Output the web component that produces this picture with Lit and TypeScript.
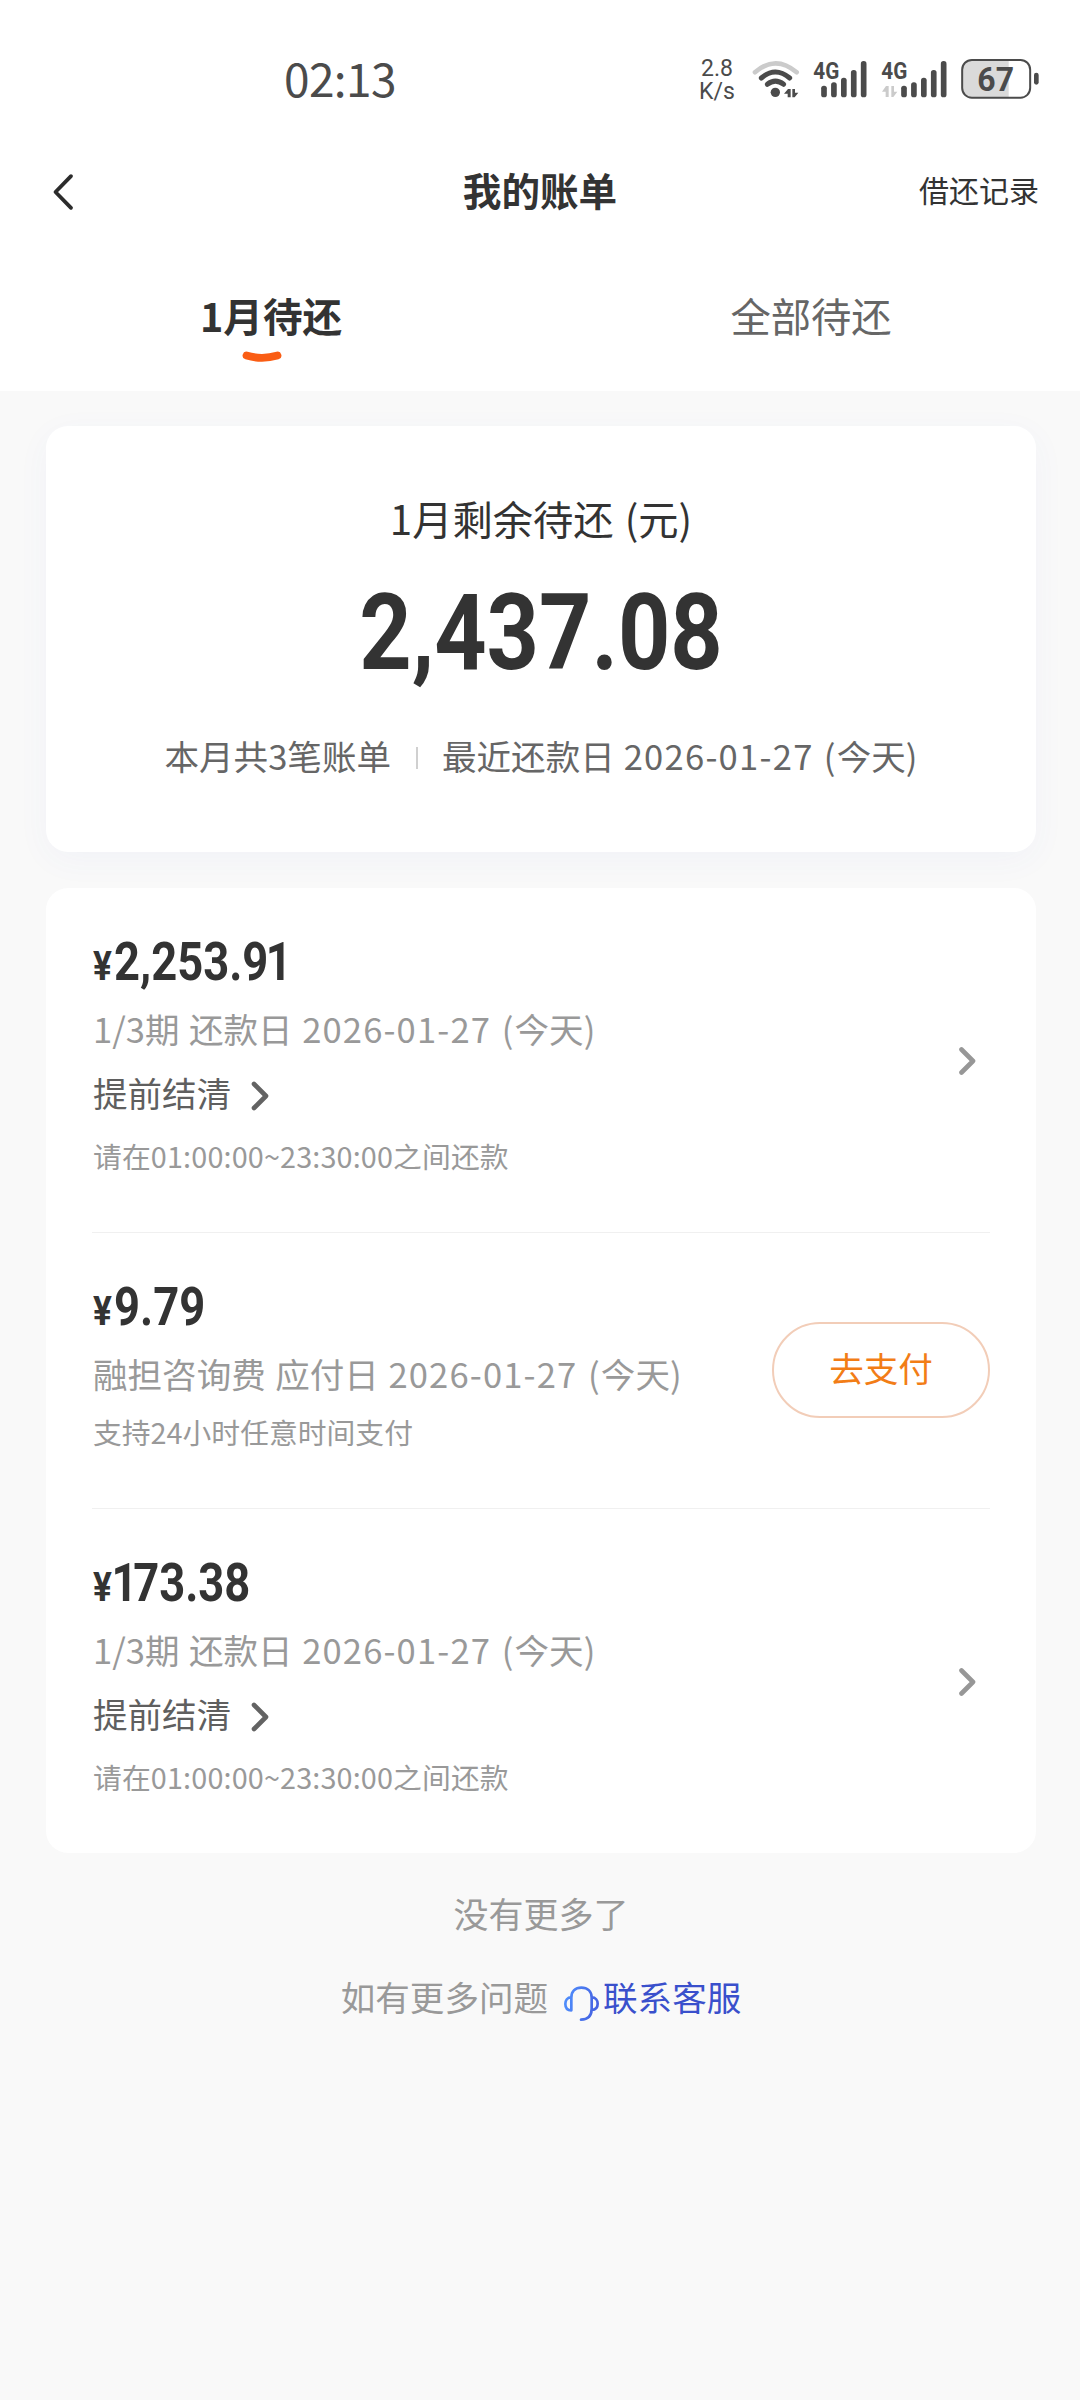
import { LitElement, html, css, svg, nothing } from "lit";
import { customElement, property } from "lit/decorators.js";

interface Bill {
  amount: string;
  label: string;
  date: string;
  note: string;
  payable: boolean;
}

const BILLS: Bill[] = [
  { amount: "2,253.91", label: "1/3期 还款日", date: "2026-01-27", note: "请在01:00:00~23:30:00之间还款", payable: false },
  { amount: "9.79", label: "融担咨询费 应付日", date: "2026-01-27", note: "支持24小时任意时间支付", payable: true },
  { amount: "173.38", label: "1/3期 还款日", date: "2026-01-27", note: "请在01:00:00~23:30:00之间还款", payable: false },
];

const bars = (x0: number) =>
  [137, 127, 113, 90, 63].map(
    (top, i) => svg`<rect x=${x0 + i * 29.75 - 8.5} y=${top} width="17" height=${172 - top} rx="8"></rect>`
  );

@customElement("status-bar")
class StatusBar extends LitElement {
  static styles = css`
    :host { display: block; }
    .bar { display: flex; height: 80px; padding: 40px 39px 0 284px; font-family: "Noto Sans CJK SC", sans-serif; color: #4b4b4b; }
    .time { font-size: 46px; line-height: 75px; letter-spacing: -0.6px; flex: 1; }
    .speed { font-family: Roboto, sans-serif; font-size: 23px; width: 48px; padding-top: 17px; text-align: center; margin-right: 9px; }
    .speed div { line-height: 23px; height: 23px; }
    svg { display: block; height: 80px; fill: #4b4b4b; flex: none; }
    .line { fill: none; stroke: #4b4b4b; stroke-width: 15; stroke-linecap: round; }
    .faint { stroke: #cbcbcb; stroke-width: 14; }
    .pale { fill: #cbcbcb; }
    .charge { fill: #dadada; }
    .case { fill: none; stroke: #4b4b4b; stroke-width: 6; }
    .net { font: 700 71px Roboto, sans-serif; }
    .pct { font: 700 98px Roboto, sans-serif; }
  `;
  render() {
    return html`
      <div class="bar">
        <div class="time">02:13</div>
        <div class="speed"><div>2.8</div><div>K/s</div></div>
        <svg viewBox="210 0 180 240" width="60">
          <path class="line faint" d="M225 97Q287 43 350 97"></path>
          <path class="line" d="M244 114Q286 78 329 114"></path>
          <path class="line" d="M262 133Q286 114 311 133"></path>
          <circle cx="286" cy="157" r="14"></circle>
          <path d="M312 161L324 147H332V172H323V161ZM355 158L344 172H337V147H345V158Z"></path>
        </svg>
        <svg viewBox="390 0 210 240" width="70">
          <text class="net" x="400" y="117" textLength="78" lengthAdjust="spacingAndGlyphs">4G</text>
          ${bars(432)}
        </svg>
        <svg viewBox="600 0 240 240" width="80">
          <text class="net" x="604" y="117" textLength="78" lengthAdjust="spacingAndGlyphs">4G</text>
          <path class="pale" d="M606 155L618 138H626V171H617V155ZM652 155L640 171H634V138H642V155Z"></path>
          ${bars(672)}
        </svg>
        <svg viewBox="840 0 243 240" width="81">
          <path class="charge" d="M878 60H986V173H878Q848 173 848 143V90Q848 60 878 60Z"></path>
          <rect class="case" x="846.5" y="60" width="204" height="113" rx="29"></rect>
          <rect x="1062" y="98" width="14" height="36" rx="7"></rect>
          <text class="pct" x="892" y="153" textLength="110" lengthAdjust="spacingAndGlyphs">67</text>
        </svg>
      </div>
    `;
  }
}

@customElement("bill-row")
class BillRow extends LitElement {
  @property({ attribute: false }) bill!: Bill;
  static styles = css`
    :host { display: block; }
    .row { display: flex; align-items: center; justify-content: space-between; height: 344px; }
    .short { height: 275px; }
    .info { align-self: flex-start; padding: 44px 0 0 1px; }
    .amount { display: flex; align-items: baseline; height: 59px; line-height: 60px; font-family: Roboto, sans-serif; font-weight: 700; color: #333; }
    .yen { font-size: 40px; width: 20.5px; transform: scaleX(0.88); transform-origin: left; }
    .sum { font-size: 53px; transform: scaleX(0.855); transform-origin: left; }
    .one { margin: 0 -5px 0 -3px; }
    .desc { font-size: 34.56px; line-height: 74px; height: 78px; color: #999; white-space: nowrap; word-spacing: 1.8px; }
    .date { letter-spacing: 1.15px; }
    .settle { display: flex; align-items: center; gap: 19.5px; height: 50px; font-size: 34.56px; line-height: 46px; color: #5f5f5f; }
    .settle span { margin-top: -4px; }
    .settle svg { margin-top: 3px; }
    .note { font-size: 28.8px; line-height: 73px; height: 76px; color: #999; white-space: nowrap; letter-spacing: 0.14px; }
    .short .note { line-height: 36px; height: 38px; letter-spacing: 0; }
    svg { display: block; fill: none; stroke-linecap: round; stroke-linejoin: round; stroke: #636363; stroke-width: 4.6; }
    .go { stroke: #979797; margin-right: 14px; margin-top: 2px; }
    .pay { box-sizing: border-box; width: 218px; height: 96px; border: 2px solid #f2cdb8; border-radius: 48px; background: #fff; font: 34.56px/86px "Noto Sans CJK SC", sans-serif; color: #f27d16; text-align: center; padding: 0 0 6px; margin-top: -2px; }
  `;
  render() {
    const b = this.bill;
    return html`
      <div class="row ${b.payable ? "short" : ""}">
        <div class="info">
          <div class="amount"><span class="yen">¥</span><span class="sum">${[...b.amount].map((c) => (c === "1" ? html`<span class="one">1</span>` : c))}</span></div>
          <div class="desc">${b.label} <span class="date">${b.date} (</span>今天)</div>
          ${b.payable
            ? nothing
            : html`<div class="settle"><span>提前结清</span><svg width="18" height="30" viewBox="0 0 18 30"><path d="M3 3L15 15L3 27"></path></svg></div>`}
          <div class="note">${b.note}</div>
        </div>
        ${b.payable
          ? html`<button class="pay">去支付</button>`
          : html`<svg class="go" width="18" height="30" viewBox="0 0 18 30"><path d="M3.5 3.5L15 15L3.5 26.5"></path></svg>`}
      </div>
    `;
  }
}

@customElement("app-root")
class AppRoot extends LitElement {
  static styles = css`
    :host { display: block; font-family: "Noto Sans CJK SC", sans-serif; color: #333; }
    .page { height: 2400px; background: #f9f9f9; overflow: hidden; }
    .top { background: #fff; height: 391px; }
    .nav { display: grid; grid-template-columns: 1fr auto 1fr; align-items: center; height: 142px; padding: 0 41px 0 51px; }
    .nav svg { display: block; fill: none; stroke: #2c2c2c; stroke-width: 3.8; stroke-linecap: round; stroke-linejoin: round; margin-top: 1px; }
    .title { font-size: 38.6px; font-weight: 700; line-height: 60px; margin-top: -5px; transform: translateX(-5px); }
    .log { font-size: 30px; line-height: 44px; text-align: right; margin-top: -5px; }
    .tabs { display: grid; grid-template-columns: 1fr 1fr; text-align: center; font-size: 40.3px; line-height: 60px; padding-top: 23px; }
    .tab { display: flex; flex-direction: column; align-items: center; padding-left: 2px; }
    .on { font-weight: 700; font-size: 39.6px; }
    .on svg { display: block; margin: 6px 19px 0 0; }
    .off { color: #666; }
    .body { padding: 35px 44px 0 46px; }
    .card { background: #fff; border-radius: 22px; }
    .sum { height: 426px; box-sizing: border-box; padding-top: 59px; text-align: center; box-shadow: 0 8px 34px rgba(80, 90, 220, 0.045); }
    .cap { font-size: 40.3px; line-height: 66px; word-spacing: 2px; }
    .total { font-family: Roboto, sans-serif; font-size: 106px; font-weight: 700; line-height: 110px; margin-top: 27px; transform: scaleX(0.862); }
    .meta { display: flex; justify-content: center; align-items: center; font-size: 34.56px; line-height: 50px; margin-top: 42px; color: #666; white-space: nowrap; word-spacing: 1.2px; }
    .meta i { width: 2px; height: 22px; background: #d0d0d0; margin: 6px 24px 0 25px; }
    .date { letter-spacing: 1.25px; }
    .list { margin-top: 36px; height: 965px; padding: 0 46px; box-sizing: border-box; }
    .rule { height: 1px; background: #f0f0f0; }
    .end { font-size: 35px; line-height: 50px; margin-top: 35px; text-align: center; color: #999; }
    .help { display: flex; justify-content: center; align-items: center; font-size: 34.56px; line-height: 50px; margin-top: 32px; color: #999; }
    .help svg { display: block; margin: 15px 3px 0 15px; fill: none; stroke: url(#tint); stroke-width: 8; stroke-linecap: round; stroke-linejoin: round; }
    .link { color: #3a50cc; }
  `;
  render() {
    return html`
      <div class="page">
        <div class="top">
          <status-bar></status-bar>
          <div class="nav">
            <svg width="24" height="38" viewBox="0 0 24 38"><path d="M20 3.2L4.5 19L20 34.8"></path></svg>
            <div class="title">我的账单</div>
            <div class="log">借还记录</div>
          </div>
          <div class="tabs">
            <div class="tab on">
              <div>1月待还</div>
              <svg width="40" height="12" viewBox="0 0 40 12"><path d="M4.5 4.6Q20 9 35.5 4.6" fill="none" stroke="#fa5d14" stroke-width="7.8" stroke-linecap="round"></path></svg>
            </div>
            <div class="tab off">全部待还</div>
          </div>
        </div>
        <div class="body">
          <div class="card sum">
            <div class="cap">1月剩余待还 (元)</div>
            <div class="total">2,437.08</div>
            <div class="meta">
              <span>本月共3笔账单</span><i></i><span>最近还款日 <span class="date">2026-01-27 (</span>今天)</span>
            </div>
          </div>
          <div class="card list">
            ${BILLS.map((b, i) => html`${i ? html`<div class="rule"></div>` : nothing}<bill-row .bill=${b}></bill-row>`)}
          </div>
          <div class="end">没有更多了</div>
          <div class="help">
            <span>如有更多问题</span>
            <svg width="37" height="37" viewBox="788 434 111 111">
              <defs>
                <linearGradient id="tint" gradientUnits="userSpaceOnUse" x1="795" y1="480" x2="895" y2="500">
                  <stop offset="0" stop-color="#4f8dfb"></stop>
                  <stop offset="1" stop-color="#4560e0"></stop>
                </linearGradient>
              </defs>
              <path d="M813 510V472C813 453 825 442 843 442S874 453 874 472V505C874 526 862 537 842 538M813 471C801 471 795 480 795 491S801 510 813 510M874 471C886 471 892 480 892 490S886 508 874 509"></path>
            </svg>
            <span class="link">联系客服</span>
          </div>
        </div>
      </div>
    `;
  }
}
